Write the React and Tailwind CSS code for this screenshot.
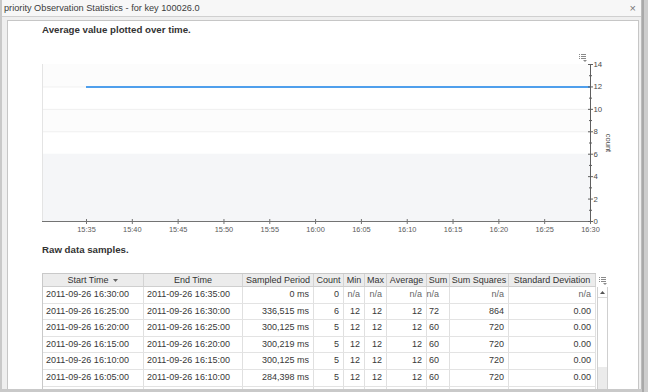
import React from "react";

const FONT = { fontFamily: '"Liberation Sans", Arial, sans-serif' };

const xLabels = ["15:35","15:40","15:45","15:50","15:55","16:00","16:05","16:10","16:15","16:20","16:25","16:30"];

function Chart() {
  const yOf = (v) => 171 - v * (157 / 14);
  const xOf = (i) => 44 + i * (504 / 11);
  const ticks = [];
  for (let v = 0; v <= 14; v++) ticks.push(v);
  return (
    <svg width="590" height="190" viewBox="0 0 590 190" className="block" style={FONT}>
      <rect x="0" y="14" width="548" height={yOf(12) - 14} fill="#fcfcfc" />
      <rect x="0" y={yOf(10)} width="548" height={yOf(8) - yOf(10)} fill="#fcfcfc" />
      <rect x="0" y={yOf(6)} width="548" height={171 - yOf(6)} fill="#f5f6f8" />
      {[12, 10, 8].map((v) => (
        <line key={v} x1="0" x2="548" y1={yOf(v) + 0.5} y2={yOf(v) + 0.5} stroke="#efefef" strokeWidth="1" />
      ))}
      <line x1="0.5" x2="0.5" y1="14" y2="171" stroke="#e4e4e4" strokeWidth="1" />
      <line x1="44" x2="548" y1={yOf(12) + 0.5} y2={yOf(12) + 0.5} stroke="#4f9fec" strokeWidth="2" />
      <line x1="0" x2="548" y1="171.5" y2="171.5" stroke="#737373" strokeWidth="1" />
      {xLabels.map((l, i) => (
        <g key={l}>
          <line x1={xOf(i) + 0.5} x2={xOf(i) + 0.5} y1="169" y2="174" stroke="#737373" strokeWidth="1" />
          <text x={xOf(i) + 0.5} y="181.5" fontSize="7.4" fill="#5a5a5a" textAnchor="middle">{l}</text>
        </g>
      ))}
      <line x1="548.5" x2="548.5" y1="14" y2="172" stroke="#5f5f5f" strokeWidth="1" />
      {ticks.map((v) => (
        <g key={v}>
          <line
            x1={v % 2 === 0 ? 546 : 547}
            x2={v % 2 === 0 ? 551 : 550}
            y1={yOf(v) + 0.5}
            y2={yOf(v) + 0.5}
            stroke="#5f5f5f"
            strokeWidth="1"
          />
          {v % 2 === 0 && (
            <text x="551.5" y={yOf(v) + 3} fontSize="7.8" fill="#4a4a4a">{v}</text>
          )}
        </g>
      ))}
      <text x="564" y="93" fontSize="7.5" fill="#4a4a4a" textAnchor="middle" transform="rotate(90 564 93)">count</text>
      <g fill="#8a8a8a">
        <rect x="537" y="4" width="1" height="1" />
        <rect x="539" y="4" width="5" height="1" />
        <rect x="537" y="6" width="1" height="1" />
        <rect x="539" y="6" width="5" height="1" />
        <rect x="537" y="8" width="1" height="1" />
        <rect x="539" y="8" width="5" height="1" />
        <path d="M541 10 L545 10 L543 12 Z" />
      </g>
    </svg>
  );
}

const cols = [
  { label: "Start Time", w: 101, align: "left" },
  { label: "End Time", w: 99, align: "left" },
  { label: "Sampled Period", w: 71, align: "right" },
  { label: "Count", w: 30, align: "right" },
  { label: "Min", w: 21, align: "right" },
  { label: "Max", w: 22, align: "right" },
  { label: "Average", w: 40, align: "right" },
  { label: "Sum", w: 23, align: "right", pr: 10 },
  { label: "Sum Squares", w: 59, align: "right" },
  { label: "Standard Deviation", w: 87, align: "right" },
];

const rows = [
  ["2011-09-26 16:30:00", "2011-09-26 16:35:00", "0 ms", "0", "n/a", "n/a", "n/a", "n/a", "n/a", "n/a"],
  ["2011-09-26 16:25:00", "2011-09-26 16:30:00", "336,515 ms", "6", "12", "12", "12", "72", "864", "0.00"],
  ["2011-09-26 16:20:00", "2011-09-26 16:25:00", "300,125 ms", "5", "12", "12", "12", "60", "720", "0.00"],
  ["2011-09-26 16:15:00", "2011-09-26 16:20:00", "300,219 ms", "5", "12", "12", "12", "60", "720", "0.00"],
  ["2011-09-26 16:10:00", "2011-09-26 16:15:00", "300,125 ms", "5", "12", "12", "12", "60", "720", "0.00"],
  ["2011-09-26 16:05:00", "2011-09-26 16:10:00", "284,398 ms", "5", "12", "12", "12", "60", "720", "0.00"],
  ["", "", "", "", "", "", "", "", "", ""],
];

function Table() {
  return (
    <div className="flex">
      <div className="w-[554px] flex flex-col border-l border-t border-[#c9c9c9]">
        <div className="flex h-[13px] bg-[#ececec] border-b border-[#cfcfcf]">
          {cols.map((c, i) => (
            <div
              key={c.label}
              style={{ width: c.w }}
              className="shrink-0 flex items-center justify-center text-[9px] leading-[13px] text-[#333] whitespace-nowrap border-r border-[#d3d3d3]"
            >
              {c.label}
              {i === 0 && (
                <svg width="7" height="5" viewBox="0 0 7 5" className="ml-[3px]">
                  <path d="M1 1 L6 1 L3.5 4 Z" fill="#666" />
                </svg>
              )}
            </div>
          ))}
        </div>
        {rows.map((r, ri) => (
          <div key={ri} className="flex h-[16.6px] border-b border-[#e3e3e3] shrink-0">
            {r.map((cell, ci) => {
              const c = cols[ci];
              return (
                <div
                  key={ci}
                  style={{ width: c.w, paddingRight: c.align === "right" ? (c.pr || 4) : 0 }}
                  className={
                    "shrink-0 flex items-center text-[9px] whitespace-nowrap border-r border-[#e0e0e0] " +
                    (c.align === "left" ? "justify-start pl-[3px] " : "justify-end ") +
                    (cell === "n/a" ? "text-[#666]" : "text-[#383838]")
                  }
                >
                  {cell}
                </div>
              );
            })}
          </div>
        ))}
      </div>
      <div className="w-[12px] flex flex-col">
        <div className="h-[14px] flex items-center justify-center">
          <svg width="9" height="9" viewBox="0 0 9 9">
            <g fill="#8a8a8a">
              <rect x="1" y="1" width="1" height="1" />
              <rect x="3" y="1" width="5" height="1" />
              <rect x="1" y="3" width="1" height="1" />
              <rect x="3" y="3" width="5" height="1" />
              <rect x="1" y="5" width="1" height="1" />
              <rect x="3" y="5" width="5" height="1" />
              <path d="M5 7 L9 7 L7 9 Z" />
            </g>
          </svg>
        </div>
        <div className="ml-[1px] w-[11px] flex-1 flex flex-col border-l border-r border-[#cfcfcf] bg-white">
          <div className="h-[11px] flex items-center justify-center border-b border-[#d8d8d8]">
            <svg width="5" height="3" viewBox="0 0 5 3">
              <path d="M0 3 L5 3 L2.5 0 Z" fill="#555" />
            </svg>
          </div>
          <div className="h-[69px] bg-white" />
          <div className="flex-1 bg-[#ebebeb]" />
        </div>
      </div>
    </div>
  );
}

export default function App() {
  return (
    <div className="w-[648px] h-[392px] bg-[#c9c9c9] flex overflow-hidden" style={FONT}>
      <div className="ml-[2px] w-[640px] h-[389px] bg-[#efefef] flex flex-col border-r border-[#bcbcbc] shrink-0">
        <div className="h-[17px] shrink-0 flex items-center justify-between pl-[2px] pr-[5px] bg-[#f7f7f7] border-b border-[#d0d0d0]">
          <span className="text-[9.2px] leading-[16px] text-[#3c3c3c]">priority Observation Statistics - for key 100026.0</span>
          <span className="text-[11px] leading-[16px] text-[#777]">×</span>
        </div>
        <div className="flex-1 min-h-0 flex pl-[5px] pr-[2px] pt-[3px]">
          <div className="flex-1 min-h-0 bg-white border-l border-t border-r border-[#c6c6c6] pl-[34px] flex flex-col overflow-hidden">
            <div className="mt-[3px] h-[12px] leading-[12px] text-[9.7px] font-bold text-[#333] shrink-0">
              Average value plotted over time.
            </div>
            <div className="mt-[14px] shrink-0">
              <Chart />
            </div>
            <div className="mt-[4px] h-[12px] leading-[12px] text-[9.7px] font-bold text-[#333] shrink-0">
              Raw data samples.
            </div>
            <div className="mt-[17px] shrink-0">
              <Table />
            </div>
          </div>
        </div>
      </div>
      <div className="w-[2px] h-full bg-[#a9a9a9] shrink-0" />
      <div className="flex-1 h-full bg-[#cdcdcd]" />
    </div>
  );
}
